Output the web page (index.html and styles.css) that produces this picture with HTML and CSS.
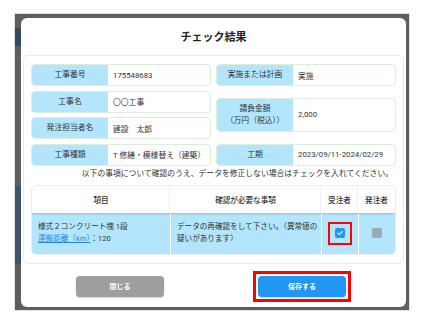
FILE: index.html
```html
<!DOCTYPE html>
<html lang="ja">
<head>
    <meta charset="UTF-8">
    <meta name="viewport" content="width=device-width, initial-scale=1.0">
    <title>チェック結果</title>
    <link rel="stylesheet" href="styles.css">
</head>
<body>
    <div class="backdrop">
        <div class="modal">
            <div class="modal-title">チェック結果</div>

            <div class="panel">
                <div class="fields">
                    <div class="field">
                        <div class="field-label">工事番号</div>
                        <div class="field-value">175548683</div>
                    </div>
                    <div class="field">
                        <div class="field-label">実施または計画</div>
                        <div class="field-value">実施</div>
                    </div>
                    <div class="field">
                        <div class="field-label">工事名</div>
                        <div class="field-value">〇〇工事</div>
                    </div>
                    <div class="field tall">
                        <div class="field-label">請負金額<br>（万円（税込））</div>
                        <div class="field-value">2,000</div>
                    </div>
                    <div class="field">
                        <div class="field-label">発注担当者名</div>
                        <div class="field-value">建設　太郎</div>
                    </div>
                    <div class="field">
                        <div class="field-label">工事種類</div>
                        <div class="field-value">T 修繕・模様替え（建築）</div>
                    </div>
                    <div class="field">
                        <div class="field-label">工期</div>
                        <div class="field-value">2023/09/11-2024/02/29</div>
                    </div>
                </div>

                <p class="notice">以下の事項について確認のうえ、データを修正しない場合はチェックを入れてください。</p>

                <table class="check-table">
                    <thead>
                        <tr>
                            <th class="c-item">項目</th>
                            <th class="c-msg">確認が必要な事項</th>
                            <th class="c-box">受注者</th>
                            <th class="c-box">発注者</th>
                        </tr>
                    </thead>
                    <tbody>
                        <tr>
                            <td class="c-item">様式２コンクリート塊 1段<br><a href="#" class="link">運搬距離（km）</a>：120</td>
                            <td class="c-msg">データの再確認をして下さい。（異常値の疑いがあります）</td>
                            <td class="c-box">
                                <span class="mark">
                                    <span class="checkbox checked">
                                        <svg viewBox="0 0 10 10" width="8" height="8"><polyline points="2.2,5.2 4.2,7 7.8,3.2" fill="none" stroke="#fff" stroke-width="1.5" stroke-linecap="round" stroke-linejoin="round"/></svg>
                                    </span>
                                </span>
                            </td>
                            <td class="c-box"><span class="checkbox disabled"></span></td>
                        </tr>
                    </tbody>
                </table>
            </div>

            <div class="modal-footer">
                <button class="btn btn-close">閉じる</button>
                <span class="save-mark"><button class="btn btn-save">保存する</button></span>
            </div>
        </div>
    </div>
</body>
</html>
```

FILE: styles.css
```css
body{
    margin:0;
    padding:0;
    background:#fff;
    font-family: Roboto, "Noto Sans CJK JP", sans-serif;
    color:#333;
}
.backdrop{
    box-sizing: border-box;
    width:396px;
    height:298px;
    margin:13px 0 0 14px;
    border:1px solid #e2e2e2;
    padding:4px 6px 3px 6px;
    display:flex;
    background:
        linear-gradient(#5e5e5e 0 14px, #34495b 14px 32px, #5e5e5e 32px 172px, #3f5566 172px 250px, #5e5e5e 250px) left top / 6px 100% no-repeat,
        #5f5f5f;
}
.modal{
    flex:1;
    background:#fff;
    border-radius:6px;
    padding:0 2px;
    display:flex;
    flex-direction:column;
}
.modal-title{
    height:37px;
    display:flex;
    align-items:center;
    justify-content:center;
    padding-bottom:2px;
    box-sizing:border-box;
    font-size:11px;
    font-weight:700;
    color:#222;
}
.panel{
    border:1px solid #e4f1e4;
    border-radius:5px;
    padding:8px 7px 8px 7px;
}
.fields{
    display:grid;
    grid-template-columns: 1fr 1fr;
    grid-auto-rows:22px;
    column-gap:5px;
    row-gap:4.5px;
}
.field{
    display:flex;
    border:1px solid #dcefdc;
    border-radius:4px;
    overflow:hidden;
    font-size:7.8px;
}
.field.tall{
    grid-row: span 2;
    align-self:center;
    height:32px;
}
.field-label{
    width:76px;
    background:#b3e5fc;
    display:flex;
    align-items:center;
    justify-content:center;
    text-align:center;
    line-height:12px;
    color:#333;
}
.field-value{
    flex:1;
    display:flex;
    align-items:center;
    padding-left:5px;
    white-space:nowrap;
    color:#333;
}
.notice{
    margin:2px 3px 5px 0;
    text-align:right;
    font-size:7.8px;
    line-height:12px;
    color:#333;
}
.check-table{
    width:100%;
    border-collapse:separate;
    border-spacing:0;
    border:1px solid #ececec;
    border-radius:5px;
    overflow:hidden;
    font-size:7.6px;
    color:#333;
    table-layout:fixed;
}
.check-table th{
    height:27px;
    font-weight:500;
    background:#fff;
    box-shadow: 0 1px 2px rgba(0,0,0,0.18);
    position:relative;
    z-index:1;
    padding:0;
}
.check-table td{
    height:41px;
    background:#b3e5fc;
    padding:0 1px 0 6px;
    line-height:12px;
    border-left:1px solid #fff;
    vertical-align:middle;
}
.check-table td:first-child{
    border-left:0;
}
.c-item{ width:138px; }
.c-msg{ width:151px; }
.c-box{ width:37px; }
.check-table td.c-box{
    text-align:center;
    padding:0;
}
.link{
    color:#1e88e5;
    text-decoration:underline;
}
.mark{
    display:inline-flex;
    align-items:center;
    justify-content:center;
    width:20px;
    height:19px;
    border:2px solid #f00;
    vertical-align:middle;
}
.checkbox{
    display:inline-flex;
    align-items:center;
    justify-content:center;
    width:10px;
    height:10px;
    border-radius:2px;
    vertical-align:middle;
}
.checkbox.checked{
    background:#2196f3;
}
.checkbox.disabled{
    background:#97abb9;
}
.modal-footer{
    flex:1;
    display:flex;
    align-items:center;
    justify-content:center;
    gap:89px;
    padding:2px 0 0 0;
}
.save-mark{
    display:flex;
    padding:2px;
    border:3px solid #f00;
}
.btn{
    width:88px;
    height:21px;
    border:0;
    border-radius:4px;
    color:#fff;
    font-family: Roboto, "Noto Sans CJK JP", sans-serif;
    font-size:7px;
    font-weight:700;
    box-shadow:0 1px 2px rgba(0,0,0,0.2);
}
.btn-close{
    background:#9e9e9e;
}
.btn-save{
    background:#2196f3;
}
```
